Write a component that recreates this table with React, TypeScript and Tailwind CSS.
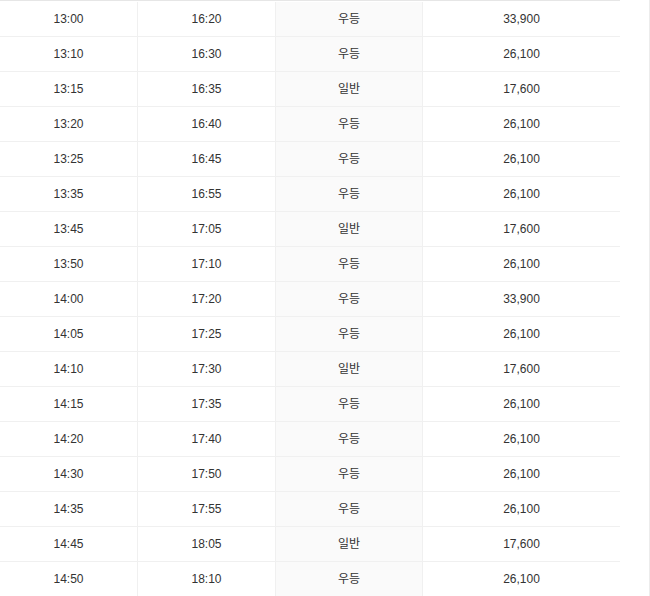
import React from 'react';

const rows: [string, string, string, string][] = [
  ['13:00', '16:20', '우등', '33,900'],
  ['13:10', '16:30', '우등', '26,100'],
  ['13:15', '16:35', '일반', '17,600'],
  ['13:20', '16:40', '우등', '26,100'],
  ['13:25', '16:45', '우등', '26,100'],
  ['13:35', '16:55', '우등', '26,100'],
  ['13:45', '17:05', '일반', '17,600'],
  ['13:50', '17:10', '우등', '26,100'],
  ['14:00', '17:20', '우등', '33,900'],
  ['14:05', '17:25', '우등', '26,100'],
  ['14:10', '17:30', '일반', '17,600'],
  ['14:15', '17:35', '우등', '26,100'],
  ['14:20', '17:40', '우등', '26,100'],
  ['14:30', '17:50', '우등', '26,100'],
  ['14:35', '17:55', '우등', '26,100'],
  ['14:45', '18:05', '일반', '17,600'],
  ['14:50', '18:10', '우등', '26,100'],
];

const App: React.FC = () => {
  return (
    <div className="flex h-[596px] w-[650px] overflow-hidden bg-white text-[12px] text-[#333] font-['Liberation_Sans','Noto_Sans_CJK_KR',sans-serif]">
      {/* Table */}
      <div className="w-[620px] border-t border-[#e6e6e6] pt-px">
        {rows.map((r, i) => (
          <div key={i} className="flex h-[35px] border-b border-[#f0f0f0]">
            <div className="flex w-[138px] items-center justify-center border-r border-[#f0f0f0]">{r[0]}</div>
            <div className="flex w-[138px] items-center justify-center border-r border-[#f0f0f0]">{r[1]}</div>
            <div className="flex w-[147px] items-center justify-center border-r border-[#f0f0f0] bg-[#fafafa]">{r[2]}</div>
            <div className="flex flex-1 items-center justify-center">{r[3]}</div>
          </div>
        ))}
      </div>
      <div className="flex-1" />
      <div className="w-px bg-[#ececec]" />
    </div>
  );
};

export default App;
